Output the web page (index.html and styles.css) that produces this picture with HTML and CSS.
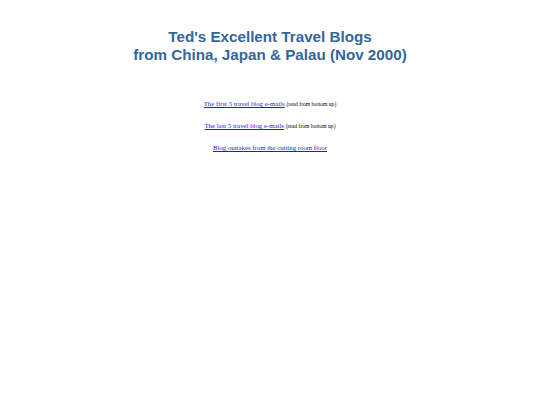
FILE: index.html
```
<!DOCTYPE html>
<html>
<head>
<meta charset="utf-8">
<link rel="stylesheet" href="styles.css">
</head>
<body>
<div class="page">
  <h1 class="title">Ted's Excellent Travel Blogs<br>from China, Japan &amp; Palau (Nov 2000)</h1>
  <ul class="links">
    <li><a href="#">The first 5 travel blog e-mails</a> <span class="note">(read from bottom up)</span></li>
    <li><a href="#">The last 5 travel blog e-mails</a> <span class="note">(read from bottom up)</span></li>
    <li><a href="#">Blog outtakes from the cutting room floor</a></li>
  </ul>
</div>
</body>
</html>
```
FILE: styles.css
```
html, body { margin: 0; padding: 0; background: #fff; }
.page { padding-top: 28px; text-align: center; }
.title {
  margin: 0;
  font-family: "Liberation Sans", Arial, sans-serif;
  font-weight: bold;
  font-size: 15.2px;
  line-height: 18px;
  color: #336699;
}
.links {
  list-style: none;
  margin: 35px 0 0;
  padding: 0;
  font-family: "Liberation Serif", "Times New Roman", serif;
  font-size: 6.8px;
  line-height: 9px;
}
.links li { margin-bottom: 13.5px; }
.links li + li { margin-top: -1.5px; }
.links a { color: #1a1aee; text-decoration: underline; }
.note { font-size: 5.6px; color: #000; }
```
